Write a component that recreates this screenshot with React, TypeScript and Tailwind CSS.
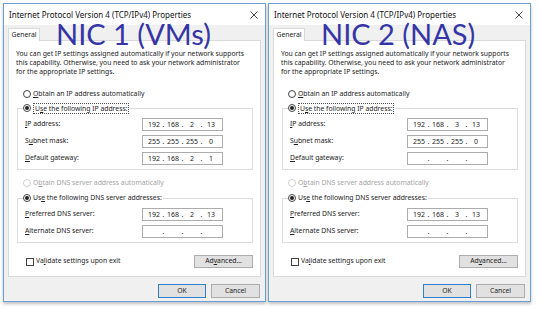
import React from 'react';

type Cfg = {
  nic: string;
  ip: string[];
  mask: string[];
  gateway: string[] | null;
  dns: string[];
};

const dialogs: Cfg[] = [
  {
    nic: 'NIC 1 (VMs)',
    ip: ['192', '168', '2', '13'],
    mask: ['255', '255', '255', '0'],
    gateway: ['192', '168', '2', '1'],
    dns: ['192', '168', '2', '13'],
  },
  {
    nic: 'NIC 2 (NAS)',
    ip: ['192', '168', '3', '13'],
    mask: ['255', '255', '255', '0'],
    gateway: null,
    dns: ['192', '168', '3', '13'],
  },
];

function IpBox({ value }: { value: string[] | null }) {
  const parts = value ?? ['', '', '', ''];
  return (
    <div className="w-[81px] h-[13px] border border-[#acacac] bg-white flex items-center px-[3px] text-[7px] leading-none text-[#222]">
      {parts.map((p, i) => (
        <React.Fragment key={i}>
          <span className="flex-1 text-center">{p}</span>
          {i < 3 && <span className="w-[3px] text-center">.</span>}
        </React.Fragment>
      ))}
    </div>
  );
}

function Radio({ checked, disabled, children }: { checked?: boolean; disabled?: boolean; children: React.ReactNode }) {
  return (
    <div className={`flex items-center gap-[2px] h-[12px] ${disabled ? 'text-[#a3a3a3]' : 'text-[#222]'}`}>
      <span
        className={`w-[8px] h-[8px] rounded-full border bg-white flex items-center justify-center ${
          disabled ? 'border-[#cfcfcf]' : 'border-[#444]'
        }`}
      >
        {checked && <span className="w-[4px] h-[4px] rounded-full bg-[#222]" />}
      </span>
      {children}
    </div>
  );
}

function Row({ label, value }: { label: React.ReactNode; value: string[] | null }) {
  return (
    <div className="flex items-center h-[13px] pl-[7px]">
      <span className="w-[117px]">{label}</span>
      <IpBox value={value} />
    </div>
  );
}

function Dialog({ cfg }: { cfg: Cfg }) {
  return (
    <div className="relative w-[263px] h-[299px] border border-[#6c9fd6] bg-[#f0f0f0] flex flex-col shadow-[0_2px_3px_rgba(0,0,0,0.25)] text-[6.8px] text-[#222]">
      {/* Title bar */}
      <div className="h-[21px] bg-white flex items-center justify-between pl-[5px] pr-[7px]">
        <span className="text-[8px] leading-[10px] text-[#111]">Internet Protocol Version 4 (TCP/IPv4) Properties</span>
        <svg width="8" height="8" viewBox="0 0 8 8" className="text-[#333]">
          <path d="M0.5 0.5 L7.5 7.5 M7.5 0.5 L0.5 7.5" stroke="currentColor" strokeWidth="0.9" />
        </svg>
      </div>

      <div className="flex-1 flex flex-col px-[4px] pt-[3px]">
        {/* Tab */}
        <div className="relative z-10 -mb-px w-[32px] h-[13px] bg-white border border-b-0 border-[#d9d9d9] flex items-center justify-center">
          General
        </div>

        {/* Panel */}
        <div className="h-[237px] bg-white border border-[#d9d9d9] pt-[8px] px-[7px] flex flex-col">
          <p className="leading-[9px]">
            You can get IP settings assigned automatically if your network supports
            <br />
            this capability. Otherwise, you need to ask your network administrator
            <br />
            for the appropriate IP settings.
          </p>

          <div className="mt-[12px] ml-[7px]">
            <Radio>
              <span>
                <u>O</u>btain an IP address automatically
              </span>
            </Radio>
          </div>

          <fieldset className="mt-[2px] ml-[1px] border border-[#dcdcdc] pb-[4px]">
            <legend className="ml-[5px] pr-[1px] bg-white">
              <Radio checked>
                <span className="border border-dotted border-[#555] px-[1px] leading-[9px]">
                  U<u>s</u>e the following IP address:
                </span>
              </Radio>
            </legend>
            <div className="flex flex-col gap-[4px] mt-[4px]">
              <Row label={<><u>I</u>P address:</>} value={cfg.ip} />
              <Row label={<>S<u>u</u>bnet mask:</>} value={cfg.mask} />
              <Row label={<><u>D</u>efault gateway:</>} value={cfg.gateway} />
            </div>
          </fieldset>

          <div className="mt-[7px] ml-[7px]">
            <Radio disabled>
              <span>
                O<u>b</u>tain DNS server address automatically
              </span>
            </Radio>
          </div>

          <fieldset className="mt-[3px] ml-[1px] border border-[#dcdcdc] pb-[4px]">
            <legend className="ml-[5px] pr-[1px] bg-white">
              <Radio checked>
                <span>
                  Us<u>e</u> the following DNS server addresses:
                </span>
              </Radio>
            </legend>
            <div className="flex flex-col gap-[4px] mt-[4px]">
              <Row label={<><u>P</u>referred DNS server:</>} value={cfg.dns} />
              <Row label={<><u>A</u>lternate DNS server:</>} value={null} />
            </div>
          </fieldset>

          <div className="mt-[12px] flex items-center justify-between">
            <div className="flex items-center gap-[2px] ml-[10px]">
              <span className="w-[8px] h-[8px] border border-[#444] bg-white" />
              <span>
                Va<u>l</u>idate settings upon exit
              </span>
            </div>
            <div className="w-[59px] h-[13px] bg-[#e1e1e1] border border-[#adadad] flex items-center justify-center">
              <span>
                Ad<u>v</u>anced...
              </span>
            </div>
          </div>
        </div>

        {/* Buttons */}
        <div className="mt-[7px] flex justify-end gap-[5px] pr-[1px]">
          <div className="w-[48px] h-[14px] bg-[#e1e1e1] border border-[#2f7fd0] flex items-center justify-center">OK</div>
          <div className="w-[49px] h-[14px] bg-[#e1e1e1] border border-[#adadad] flex items-center justify-center">Cancel</div>
        </div>
      </div>

      {/* Annotation over the dialog */}
      <div className="absolute left-[52px] top-[18px] text-[29px] leading-[23px] text-[#3535a8] font-['Lato',sans-serif] whitespace-nowrap">
        {cfg.nic}
      </div>
    </div>
  );
}

export default function App() {
  return (
    <div className="w-[540px] h-[312px] bg-white flex gap-[2px] pt-[3px] pl-[3px] font-['Noto_Sans',sans-serif]">
      {dialogs.map((d) => (
        <Dialog key={d.nic} cfg={d} />
      ))}
    </div>
  );
}
